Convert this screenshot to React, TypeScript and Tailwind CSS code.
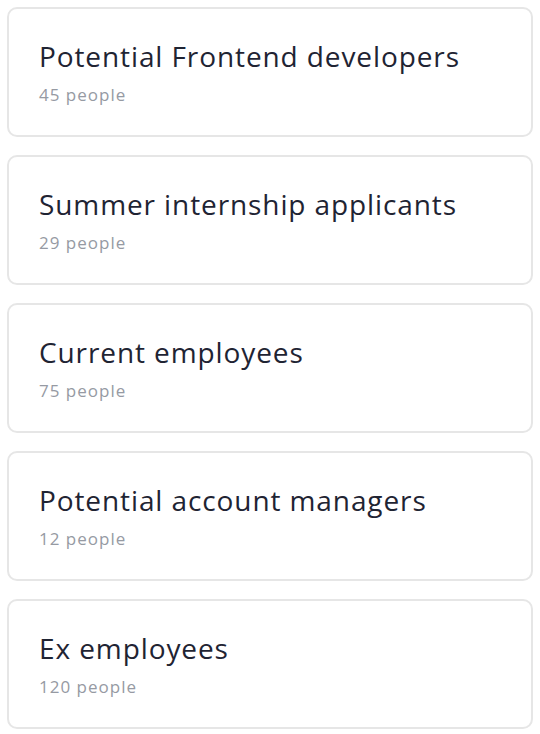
const groups = [
  { name: 'Potential Frontend developers', count: 45 },
  { name: 'Summer internship applicants', count: 29 },
  { name: 'Current employees', count: 75 },
  { name: 'Potential account managers', count: 12 },
  { name: 'Ex employees', count: 120 },
]

export default function App() {
  return (
    <div className="min-h-screen bg-white p-[7px] font-['Open_Sans',sans-serif]">
      <div className="flex flex-col gap-[18px]">
        {groups.map((g) => (
          <div
            key={g.name}
            className="h-[130px] rounded-[10px] border-2 border-[#e6e6e6] bg-white pl-[30px] pt-[29px]"
          >
            <div className="text-[28px] leading-[36px] tracking-[0.9px] text-[#1f2433]">{g.name}</div>
            <div className="mt-[10px] text-[17px] leading-[22px] tracking-[1px] text-[#969aa3]">
              {g.count} people
            </div>
          </div>
        ))}
      </div>
    </div>
  )
}
